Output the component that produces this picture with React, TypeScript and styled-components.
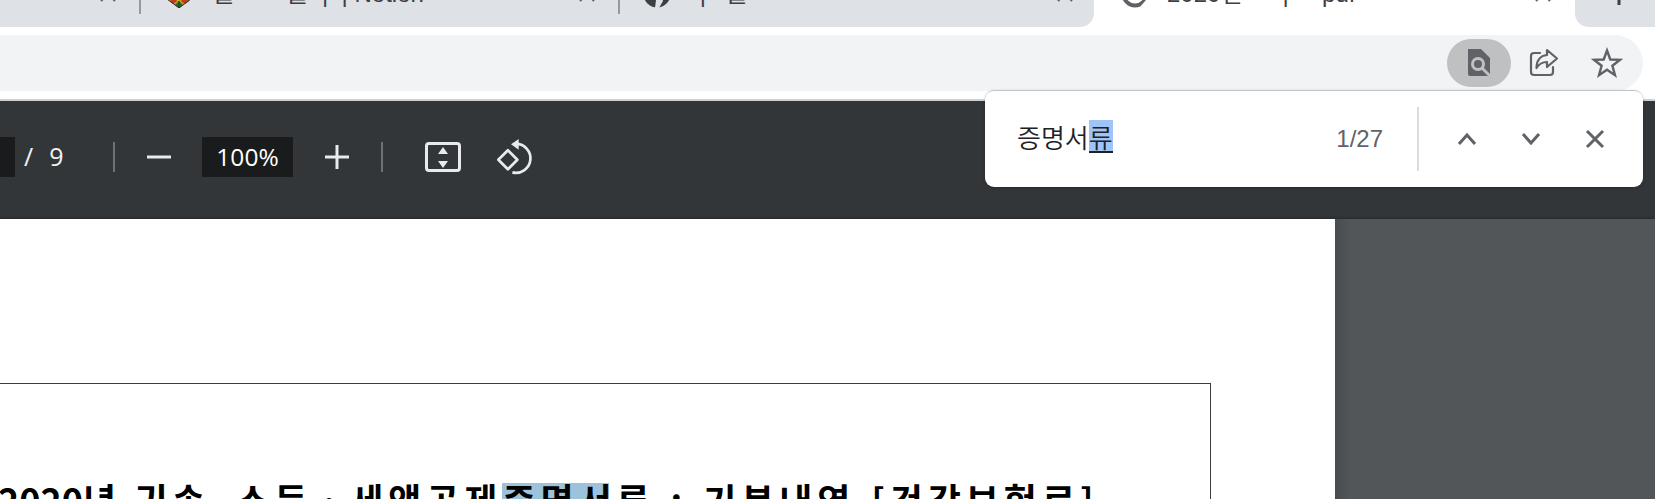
import React from "react";
import styled, { createGlobalStyle } from "styled-components";

const Global = createGlobalStyle`
  html, body { margin: 0; padding: 0; background: #fff; overflow: hidden; }
  #root { width: 1655px; height: 499px; }
`;
const Window = styled.div`
  width: 1655px; height: 499px; overflow: hidden; position: relative;
  display: flex; flex-direction: column; background: #fff;
  font-family: "Noto Sans CJK KR", "Liberation Sans", sans-serif;
`;
const TabStrip = styled.div`display: flex; height: 27px; flex: none; overflow: hidden; background: #fff;`;
const TabGroup = styled.div`
  width: 1094px; flex: none; display: flex; height: 27px; overflow: hidden;
  background: #dee1e6; border-bottom-right-radius: 14px;
`;
const Tab = styled.div<{ $w: number; $pl: number; $pr: number }>`
  flex: none; width: ${p => p.$w}px; box-sizing: border-box; height: 28px; margin-top: -20px;
  padding: 0 ${p => p.$pr}px 0 ${p => p.$pl}px; display: flex; align-items: center;
`;
const TabSep = styled.div`flex: none; width: 2px; height: 14px; background: #96999d;`;
const TabTitle = styled.div<{ $pl?: number }>`
  flex: 1; min-width: 0; padding-left: ${p => p.$pl ?? 22}px; white-space: pre; overflow: hidden; font-size: 24px; line-height: 28px;
  color: #3c4043; font-family: "Liberation Sans", "Noto Sans CJK KR", sans-serif;
`;
const ActiveTab = styled(Tab)`background: #fff;`;
const NewTabArea = styled.div`
  flex: 1; height: 27px; background: #dee1e6; border-bottom-left-radius: 14px; overflow: hidden;
  display: flex; padding-left: 30px;
`;
const NewIcon = styled.svg`flex: none; width: 28px; height: 28px; margin-top: -23px;`;
const IconBox = styled.svg`flex: none; width: 28px; height: 28px;`;

const ToolbarRow = styled.div`flex: none; height: 74px; box-sizing: border-box; padding: 8px 12px 8px 0; border-bottom: 2px solid #cfd0d1;`;
const AddressBar = styled.div`
  height: 56px; margin-left: -40px; border-radius: 28px; background: #f1f3f4;
  display: flex; align-items: center; justify-content: flex-end; padding-right: 4px; box-sizing: content-box;
`;
const PillButton = styled.div`
  width: 64px; height: 48px; border-radius: 24px; background: #bfc0c2; display: flex; align-items: center; justify-content: center;
`;
const RoundButton = styled.div`
  width: 64px; height: 48px; display: flex; align-items: center; justify-content: center;
`;
const ActionIcon = styled.svg`width: 32px; height: 32px; display: block;`;

const PdfBar = styled.div`
  flex: none; height: 118px; box-sizing: border-box; padding-bottom: 6px; background: #323639; display: flex; align-items: center; color: #f1f3f4;
  font-family: "Open Sans", "Liberation Sans", sans-serif;
  box-shadow: inset 0 -3px 3px -2px rgba(0,0,0,.25);
`;
const PageInput = styled.div`width: 15px; height: 40px; background: #191b1c; flex: none;`;
const PageCount = styled.div`width: 98px; flex: none; box-sizing: border-box; padding-left: 9px; font-size: 25px; letter-spacing: 1px; white-space: pre; line-height: 39px; height: 40px;`;
const BarSep = styled.div`width: 2px; height: 30px; background: #6e7275; flex: none;`;
const BarButton = styled.div<{ $w: number }>`
  width: ${p => p.$w}px; flex: none; height: 40px; display: flex; align-items: center; justify-content: center;
`;
const ZoomField = styled.div`
  width: 91px; height: 40px; flex: none; background: #191b1c; font-size: 24.5px; line-height: 39px; text-align: center; color: #fff;
`;
const BarIcon = styled.svg`display: block; flex: none;`;

const Main = styled.div`flex: 1; display: flex; min-height: 0; overflow: hidden;`;
const PageArea = styled.div`width: 1335px; flex: none; background: #fff; overflow: hidden;`;
const Sheet = styled.div`
  margin: 164px 0 0 -2px; width: 1213px; height: 300px; box-sizing: border-box; border: 1px solid #3d3d3d;
  padding-top: 97px;
`;
const Heading = styled.div`
  margin-left: -1px; white-space: pre; font-size: 36px; line-height: 36px; font-weight: 700; color: #000; letter-spacing: 4.9px;
`;
const Digits = styled.span`letter-spacing: 0;`;
const Hit = styled.span`
  background: linear-gradient(#9dc3dc, #9dc3dc) 0 2px no-repeat; display: inline-block; width: 107px; margin-right: 7px; height: 36px; line-height: 36px;
`;
const Tail = styled.span`word-spacing: 3px;`;
const Sidebar = styled.div`flex: 1; background: linear-gradient(to right, #484c4f, #525659 16px);`;

const FindBar = styled.div`
  position: absolute; left: 985px; top: 90px; width: 658px; height: 97px; box-sizing: border-box;
  background: #fff; border-radius: 9px; border-top: 1px solid #c4c5c6; display: flex; align-items: center;
  padding: 0 16px 0 32px; box-shadow: 0 1px 3px rgba(0,0,0,.25);
`;
const FindInput = styled.div`
  flex: 1; min-width: 0; margin-bottom: 6px; font-size: 26px; line-height: 33px; color: #202124; font-weight: 350; white-space: pre;
`;
const Composing = styled.span`background: #9fc5f8; display: inline-block; height: 33px; box-sizing: border-box; border-bottom: 2px solid #202124; line-height: 33px;`;
const FindCount = styled.div`font-family: "Liberation Sans", sans-serif; font-size: 24px; color: #5f6368; line-height: 33px; margin-bottom: 2px;`;
const FindSep = styled.div`width: 2px; height: 64px; background: #dadce0; margin: 0 16px 0 34px; flex: none;`;
const FindButton = styled.div`width: 64px; height: 48px; flex: none; display: flex; align-items: center; justify-content: center;`;

const Cube = () => (
  <IconBox viewBox="0 0 28 28">
    <polygon points="14,28 26,19 14,10 2,19" fill="#b9a022" />
    <polygon points="14,28 18,25 14,21 10,25" fill="#2f6d22" />
    <polygon points="8,24 12,21 9,18 5,21" fill="#c43a1f" />
    <polygon points="20,24 24,21 20,18 16,21" fill="#c43a1f" />
    <polygon points="14,21 17,19 14,17 11,19" fill="#d8b020" />
    <path d="M14 28L26 19M14 28L2 19M14 28V21" stroke="#2b2b2b" strokeWidth="1" fill="none" />
  </IconBox>
);
const Dark = () => (
  <IconBox viewBox="0 0 28 28">
    <circle cx="14" cy="14" r="13.5" fill="#3c4043" />
    <path d="M13 20l5-7 2 8-4 7h-4z" fill="#dee1e6" />
  </IconBox>
);
const Ring = () => (
  <IconBox viewBox="0 0 28 28">
    <circle cx="14" cy="14" r="11.5" fill="none" stroke="#5f6368" strokeWidth="4" />
    <path d="M21 27l6-7" stroke="#fff" strokeWidth="3" />
  </IconBox>
);
const TabClose = () => (
  <IconBox viewBox="0 0 28 28">
    <path d="M7 7l14 14M21 7L7 21" stroke="#5f6368" strokeWidth="2" fill="none" />
  </IconBox>
);

export default function App() {
  return (
    <Window>
      <Global />
      <TabStrip>
        <TabGroup>
          <Tab $w={139} $pl={0} $pr={17}>
            <TabTitle />
            <TabClose />
          </Tab>
          <TabSep />
          <Tab $w={477} $pl={24} $pr={17}>
            <Cube />
            <TabTitle $pl={20}>{"을       \u2009을  |  | Notion"}</TabTitle>
            <TabClose />
          </Tab>
          <TabSep />
          <Tab $w={474} $pl={23} $pr={15}>
            <Dark />
            <TabTitle $pl={22}>{" |   을"}</TabTitle>
            <TabClose />
          </Tab>
        </TabGroup>
        <ActiveTab $w={481} $pl={27} $pr={18}>
          <Ring />
          <TabTitle $pl={18}>{"2020년      |     pdf"}</TabTitle>
          <TabClose />
        </ActiveTab>
        <NewTabArea>
          <NewIcon viewBox="0 0 28 28">
            <path d="M14 3v25M3 14h22" stroke="#3c4043" strokeWidth="3" fill="none" />
          </NewIcon>
        </NewTabArea>
      </TabStrip>

      <ToolbarRow>
        <AddressBar>
          <PillButton>
            <ActionIcon viewBox="0 0 32 32">
              <path d="M5 2h13l9 9v16a2 2 0 0 1-2 2H7a2 2 0 0 1-2-2z" fill="#5f6368" />
              <circle cx="15" cy="17" r="5.5" fill="none" stroke="#bfc0c2" strokeWidth="3" />
              <path d="M19 21l8 8" stroke="#bfc0c2" strokeWidth="3" />
            </ActionIcon>
          </PillButton>
          <RoundButton>
            <ActionIcon viewBox="0 0 32 32">
              <path d="M13 6H7a3 3 0 0 0-3 3v16a3 3 0 0 0 3 3h16a3 3 0 0 0 3-3v-5" fill="none" stroke="#5f6368" strokeWidth="2.2" strokeLinecap="round" />
              <path d="M20 3l10 8.500L20 20v-5c-5 0-8 2-10.500 6C9.500 14 13 8.500 20 8z" fill="none" stroke="#5f6368" strokeWidth="2.2" strokeLinejoin="round" />
            </ActionIcon>
          </RoundButton>
          <RoundButton>
            <ActionIcon viewBox="0 0 32 32">
              <polygon points="16,3.500 19.300,12.500 29,12.800 21.400,18.800 24,28.200 16,22.800 8,28.200 10.600,18.800 3,12.800 12.700,12.500" fill="none" stroke="#5f6368" strokeWidth="2.400" strokeLinejoin="miter" />
            </ActionIcon>
          </RoundButton>
        </AddressBar>
      </ToolbarRow>

      <PdfBar>
        <PageInput />
        <PageCount>{"/  9"}</PageCount>
        <BarSep />
        <BarButton $w={87}>
          <BarIcon width="24" height="4" viewBox="0 0 24 4"><rect width="24" height="3" y="0.500" fill="#e8eaed" /></BarIcon>
        </BarButton>
        <ZoomField>100%</ZoomField>
        <BarButton $w={88}>
          <BarIcon width="24" height="24" viewBox="0 0 24 24"><path d="M12 0v24M0 12h24" stroke="#e8eaed" strokeWidth="3" /></BarIcon>
        </BarButton>
        <BarSep />
        <BarButton $w={41} />
        <BarIcon width="38" height="32" viewBox="0 0 38 32">
          <rect x="2.500" y="2.500" width="33" height="27" rx="2.500" fill="none" stroke="#e8eaed" strokeWidth="3" />
          <path d="M19 6l5 7H14zM19 27l-5-7h10z" fill="#e8eaed" />
        </BarIcon>
        <BarButton $w={35} />
        <BarIcon width="38" height="38" viewBox="0 0 42 42">
          <path d="M21 6.500A16 16 0 1 1 17 38" fill="none" stroke="#e8eaed" strokeWidth="3" />
          <path d="M15.500 7L24 1v12z" fill="#e8eaed" />
          <polygon points="12,13.500 22.500,24 12,34.500 1.500,24" fill="none" stroke="#e8eaed" strokeWidth="3" strokeLinejoin="round" />
        </BarIcon>
      </PdfBar>

      <Main>
        <PageArea>
          <Sheet>
            <Heading>
              <Digits>2020</Digits>{"년 귀속  소득ㆍ세액공제"}<Hit>증명서</Hit><Tail>{"류 : 기본내역 [건강보험료]"}</Tail>
            </Heading>
          </Sheet>
        </PageArea>
        <Sidebar />
      </Main>

      <FindBar>
        <FindInput>증명서<Composing>류</Composing></FindInput>
        <FindCount>1/27</FindCount>
        <FindSep />
        <FindButton>
          <BarIcon width="20" height="14" viewBox="0 0 20 14"><path d="M2 12l8-9 8 9" fill="none" stroke="#5f6368" strokeWidth="3" /></BarIcon>
        </FindButton>
        <FindButton>
          <BarIcon width="20" height="14" viewBox="0 0 20 14"><path d="M2 2l8 9 8-9" fill="none" stroke="#5f6368" strokeWidth="3" /></BarIcon>
        </FindButton>
        <FindButton>
          <BarIcon width="20" height="20" viewBox="0 0 20 20"><path d="M2 2l16 16M18 2L2 18" fill="none" stroke="#5f6368" strokeWidth="3" /></BarIcon>
        </FindButton>
      </FindBar>
    </Window>
  );
}
